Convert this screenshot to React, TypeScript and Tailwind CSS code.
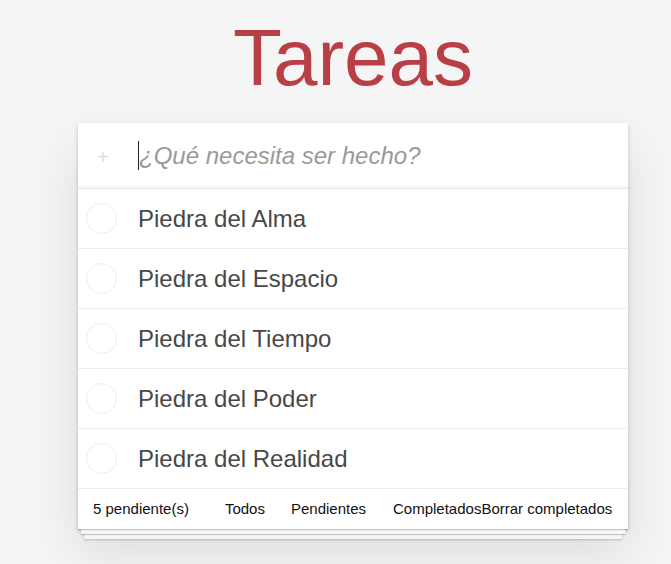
import React from "react";

const items = [
  "Piedra del Alma",
  "Piedra del Espacio",
  "Piedra del Tiempo",
  "Piedra del Poder",
  "Piedra del Realidad",
];

export default function App() {
  return (
    <div
      className="min-h-[564px] w-full bg-[#f5f5f5] text-[#111]"
      style={{ fontFamily: '"Liberation Sans", Arial, Helvetica, sans-serif' }}
    >
      <div className="w-[550px] ml-[78px] pt-[18px]">
        <h1 className="text-center text-[80px] leading-none font-normal text-[#b83f45] h-[80px] mb-[25px]">
          Tareas
        </h1>
        <section className="relative bg-white shadow-[0_2px_4px_0_rgba(0,0,0,0.2),0_25px_50px_0_rgba(0,0,0,0.1)]">
          <div className="flex items-center h-[65px] shadow-[inset_0_-2px_1px_rgba(0,0,0,0.03)]">
            <div className="w-[60px] flex text-[20px] leading-none text-[#dcdcdc]">
              <span className="ml-[19px] mt-[2px]">+</span>
            </div>
            <div className="flex items-center">
              <span className="w-px h-[29px] bg-[#222]" />
              <span className="italic text-[24px] text-[#9a9a9a]">¿Qué necesita ser hecho?</span>
            </div>
          </div>
          <ul className="border-t border-[#e6e6e6]">
            {items.map((t) => (
              <li key={t} className="flex items-center h-[60px] border-b border-[#ededed]">
                <div className="w-[60px] flex">
                  <div className="w-[31px] h-[31px] rounded-full border border-[#ededed] ml-[8px]" />
                </div>
                <span className="text-[24px] text-[#484848]">{t}</span>
              </li>
            ))}
          </ul>
          <footer className="relative flex items-center h-[40px] px-[15px] text-[15px] text-[#111] before:content-[''] before:absolute before:left-0 before:right-0 before:bottom-0 before:h-[50px] before:overflow-hidden before:shadow-[0_1px_1px_rgba(0,0,0,0.2),0_8px_0_-3px_#f6f6f6,0_9px_1px_-3px_rgba(0,0,0,0.2),0_16px_0_-6px_#f6f6f6,0_17px_2px_-6px_rgba(0,0,0,0.2)]">
            <span className="relative">5 pendiente(s)</span>
            <span className="relative ml-[36px]">Todos</span>
            <span className="relative ml-[26px]">Pendientes</span>
            <span className="relative ml-[27px]">Completados</span>
            <span className="relative">Borrar completados</span>
          </footer>
        </section>
      </div>
    </div>
  );
}
